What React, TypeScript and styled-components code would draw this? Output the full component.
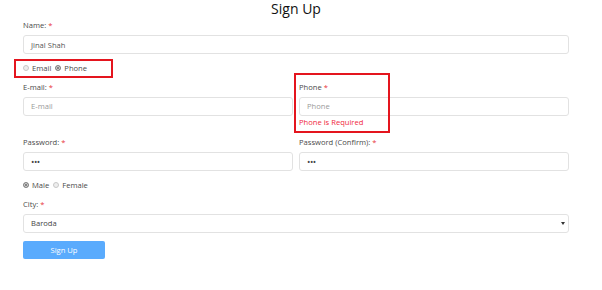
import React from 'react';
import styled, { createGlobalStyle } from 'styled-components';

const GlobalStyle = createGlobalStyle`
  html, body {
    margin: 0;
    padding: 0;
    background: #ffffff;
    font-family: 'Open Sans', 'Noto Sans', sans-serif;
  }
`;

const Page = styled.div`
  width: 602px;
  height: 290px;
  box-sizing: border-box;
  padding: 1px 33px 0 23px;
`;

const Title = styled.h1`
  margin: 0;
  height: 16px;
  line-height: 16px;
  font-size: 14px;
  font-weight: 500;
  color: #111;
  text-align: center;
`;

const Label = styled.div<{ $top?: number }>`
  margin-top: ${(p) => p.$top ?? 0}px;
  height: 12px;
  line-height: 12px;
  font-size: 7.6px;
  color: #4a4a4a;
`;

const Star = styled.span`
  color: #e8333d;
  margin-left: 2px;
`;

const Input = styled.div<{ $placeholder?: boolean }>`
  margin-top: 4px;
  height: 19px;
  box-sizing: border-box;
  border: 1px solid #e2e2e2;
  border-radius: 3px;
  padding: 0 7px;
  display: flex;
  align-items: center;
  font-size: 7.6px;
  color: ${(p) => (p.$placeholder ? '#9a9a9a' : '#555')};
`;

const Dots = styled.span`
  font-size: 9px;
  letter-spacing: -0.5px;
  color: #444;
`;

const RadioBox = styled.div`
  display: inline-flex;
  align-items: center;
  gap: 4px;
  margin: 4px 0 0 -9px;
  height: 19px;
  width: 99px;
  box-sizing: border-box;
  padding-left: 7px;
  border: 2px solid #e4151e;
`;

const RadioRow = styled.div<{ $top?: number }>`
  display: flex;
  align-items: center;
  gap: 4px;
  margin-top: ${(p) => p.$top ?? 0}px;
  height: 12px;
`;

const RadioItem = styled.label`
  display: inline-flex;
  align-items: center;
  gap: 3px;
  font-size: 7.6px;
  color: #4a4a4a;
`;

const Dot = styled.span<{ $checked?: boolean }>`
  width: 6px;
  height: 6px;
  border-radius: 50%;
  box-sizing: border-box;
  border: 1px solid ${(p) => (p.$checked ? '#888' : '#c8c8c8')};
  background: ${(p) => (p.$checked ? '#666' : '#eee')};
  box-shadow: ${(p) => (p.$checked ? 'inset 0 0 0 1px #e4e4e4' : 'none')};
`;

const Row = styled.div<{ $top: number }>`
  display: grid;
  grid-template-columns: 1fr 1fr;
  column-gap: 6px;
  margin-top: ${(p) => p.$top}px;
`;

const Field = styled.div`
  position: relative;
`;

const Error = styled.div`
  height: 12px;
  line-height: 12px;
  font-size: 7.6px;
  color: #f0283c;
`;

const Highlight = styled.div`
  position: absolute;
  left: -5px;
  top: -8px;
  width: 96px;
  height: 60px;
  box-sizing: border-box;
  border: 2px solid #e4151e;
  pointer-events: none;
`;

const Select = styled(Input)`
  justify-content: space-between;
  color: #444;
  padding-right: 3px;
`;

const Caret = styled.span`
  width: 0;
  height: 0;
  border-left: 2px solid transparent;
  border-right: 2px solid transparent;
  border-top: 3px solid #333;
`;

const Button = styled.button`
  display: block;
  margin-top: 8px;
  width: 82px;
  height: 18px;
  border: none;
  border-radius: 2px;
  background: #5aabfd;
  color: #fff;
  font-family: inherit;
  font-size: 7.6px;
  padding: 0;
`;

export default function App() {
  return (
    <Page>
      <GlobalStyle />
      <Title>Sign Up</Title>

      <Label $top={2}>
        Name:<Star>*</Star>
      </Label>
      <Input>Jinal Shah</Input>

      <RadioBox>
        <RadioItem>
          <Dot />
          Email
        </RadioItem>
        <RadioItem>
          <Dot $checked />
          Phone
        </RadioItem>
      </RadioBox>

      <Row $top={3}>
        <Field>
          <Label>
            E-mail:<Star>*</Star>
          </Label>
          <Input $placeholder>E-mail</Input>
        </Field>
        <Field>
          <Highlight />
          <Label>
            Phone<Star>*</Star>
          </Label>
          <Input $placeholder>Phone</Input>
          <Error>Phone is Required</Error>
        </Field>
      </Row>

      <Row $top={8}>
        <Field>
          <Label>
            Password:<Star>*</Star>
          </Label>
          <Input>
            <Dots>•••</Dots>
          </Input>
        </Field>
        <Field>
          <Label>
            Password (Confirm):<Star>*</Star>
          </Label>
          <Input>
            <Dots>•••</Dots>
          </Input>
        </Field>
      </Row>

      <RadioRow $top={8}>
        <RadioItem>
          <Dot $checked />
          Male
        </RadioItem>
        <RadioItem>
          <Dot />
          Female
        </RadioItem>
      </RadioRow>

      <Label $top={7}>
        City:<Star>*</Star>
      </Label>
      <Select>
        Baroda
        <Caret />
      </Select>

      <Button>Sign Up</Button>
    </Page>
  );
}
